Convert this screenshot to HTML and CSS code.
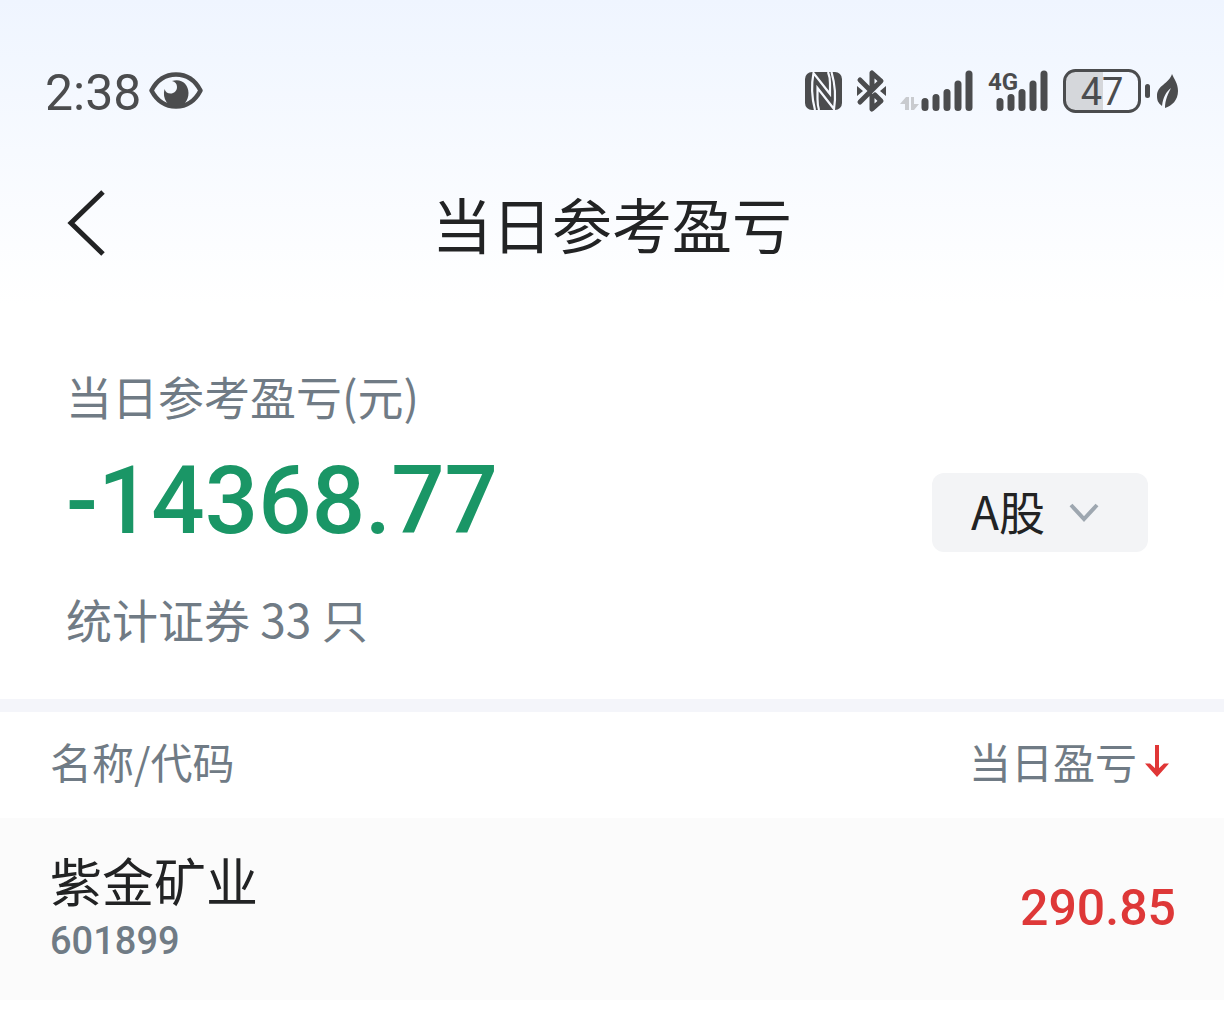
FILE: index.html
```html
<!DOCTYPE html>
<html lang="zh-CN">
<head>
	<meta charset="utf-8">
	<meta name="viewport" content="width=device-width, initial-scale=1">
	<title>当日参考盈亏</title>
	<link rel="stylesheet" href="styles.css">
</head>
<body>
<div class="top">
	<div class="status-bar">
		<span class="clock">2:38</span>
		<svg class="eye" width="54" height="38" viewBox="0 0 54 38">
			<path d="M2.500 18.500C8 8 17 2.500 27 2.500S46 8 51.500 18.500C46 29 37 34.500 27 34.500S8 29 2.500 18.500Z" fill="none" stroke="#4b4c4e" stroke-width="4.500" stroke-linejoin="round"/>
			<path d="M23 9C32 6 39.500 12 39.500 21C39.500 29 34 35 27 35C19 35 13 27 15.500 17C16.500 20 18.500 21.500 21.500 21.500C25 21.500 28 19 28 15C28 11.500 26 9.500 23 9Z" fill="#4b4c4e"/>
		</svg>
		<div class="status-icons">
			<svg width="37" height="38" viewBox="0 0 37 38">
				<rect width="37" height="38" rx="7" fill="#4b4c4e"/>
				<path d="M10 38Q5 19 8.500 1L25 22V11Q25 5 23 0M26.500 0Q32 19 29 37L12.500 16V27Q12.500 33 14 38" fill="none" stroke="#f6f9ff" stroke-width="2.200"/>
			</svg>
			<svg class="bluetooth" width="29" height="42" viewBox="0 0 29 42">
				<path d="M3 10L12 19M3 32L24 11L15 3V18M18 25L24 31L15 39V26" fill="none" stroke="#4b4c4e" stroke-width="5" stroke-linecap="round" stroke-linejoin="round"/>
				<path d="M0 16L6 21L0 26ZM29 16L23 21L29 26Z" fill="#4b4c4e"/>
			</svg>
			<svg width="72" height="42" viewBox="0 0 72 42">
				<path d="M4 40V34H-1L5 27H8V40ZM10 27H13V34H18L13 40H10Z" fill="#c9cbcf"/>
				<path d="M24 31.500V37.500M35 27.500V37.500M46 22.500V37.500M57 14V37.500M68 4V37.500" stroke="#4b4c4e" stroke-width="7" stroke-linecap="round"/>
			</svg>
			<svg width="60" height="42" viewBox="0 0 60 42">
				<text class="network" x="0" y="20">4G</text>
				<path d="M12 31.500V37.500M23 27.500V37.500M34 22.500V37.500M45 14V37.500M56 4V37.500" stroke="#4b4c4e" stroke-width="7" stroke-linecap="round"/>
			</svg>
			<svg class="battery" width="87" height="44" viewBox="0 0 87 44">
				<path d="M40 2H12Q2 2 2 12V32Q2 42 12 42H40Z" fill="#d5d7db"/>
				<rect x="1.500" y="1.500" width="75" height="41" rx="11" fill="none" stroke="#4b4c4e" stroke-width="3"/>
				<rect x="82" y="15" width="5" height="14" rx="2.500" fill="#4b4c4e"/>
				<text class="level" x="39" y="36" text-anchor="middle">47</text>
			</svg>
			<svg width="22" height="34" viewBox="0 0 22 34">
				<path d="M15 0C17 5 21 9 21 17C21 26 15 32 8 34C8 26 11 20 14 14C9 18 6 23 5 32C1 29 0 26 0 22C0 11 12 10 15 0Z" fill="#4b4c4e"/>
			</svg>
		</div>
	</div>
	<header class="header">
		<button class="back" type="button" aria-label="返回">
			<svg width="40" height="66" viewBox="0 0 40 66"><path d="M37 2L5 33L37 64" fill="none" stroke="#222324" stroke-width="5"/></svg>
		</button>
		<h1>当日参考盈亏</h1>
	</header>
</div>

<section class="summary">
	<div>
		<p class="label">当日参考盈亏(元)</p>
		<p class="amount">-14368.77</p>
		<p class="label">统计证券 33 只</p>
	</div>
	<div class="market">
		<select aria-label="市场">
			<option>A股</option>
		</select>
		<svg width="30" height="20" viewBox="0 0 30 20"><path d="M2 2L15 16L28 2" fill="none" stroke="#9ea7b0" stroke-width="4"/></svg>
	</div>
</section>

<table class="stocks">
	<thead>
		<tr>
			<th>名称/代码</th>
			<th class="right">
				<button class="sort" type="button">当日盈亏<svg width="26" height="34" viewBox="0 0 26 34"><path d="M13 1V30" stroke="#e03636" stroke-width="4"/><path d="M1 19.500H6L13 26L20 19.500H25L13 33Z" fill="#e03636"/></svg></button>
			</th>
		</tr>
	</thead>
	<tbody>
		<tr>
			<td>
				<div class="name">紫金矿业</div>
				<div class="code">601899</div>
			</td>
			<td class="profit">290.85</td>
		</tr>
	</tbody>
</table>
</body>
</html>
```
FILE: styles.css
```css
* {
  box-sizing: border-box;
}

body {
  margin: 0;
  background: #fff;
  color: #222324;
  font-family: "Noto Sans CJK SC", sans-serif;
}

h1, p {
  margin: 0;
  font-weight: 400;
}

svg {
  display: block;
  flex: none;
  overflow: visible;
}

button, select {
  padding: 0;
  border: 0;
  background: none;
  color: inherit;
  font: inherit;
}

.top {
  background: linear-gradient(#eff5ff, #fff);
}

.status-bar {
  display: flex;
  align-items: center;
  padding: 54px 45px 18px;
  color: #4b4c4e;
}

/* figures use Roboto, the rest of the page is CJK */
.clock, .network, .level, .amount, .code, .profit {
  font-family: Roboto, sans-serif;
}

.clock {
  padding-top: 4px;
  font-size: 50px;
  line-height: 70px;
}

.eye {
  margin-left: 8px;
}

.status-icons {
  display: flex;
  align-items: center;
  gap: 15px;
  margin-left: auto;
}

.battery {
  margin-right: -8px;
}

.network {
  font-size: 24px;
  font-weight: 700;
  fill: #4b4c4e;
}

.level {
  font-size: 38px;
  fill: #4b4c4e;
}

/* side columns are equal so the title stays centred */
.header {
  display: grid;
  grid-template-columns: 80px 1fr 80px;
  align-items: center;
  padding: 32px 66px 36px;
}

.header h1 {
  font-size: 60px;
  line-height: 90px;
  text-align: center;
}

.summary {
  display: flex;
  align-items: center;
  justify-content: space-between;
  padding: 58px 76px 48px 66px;
  border-bottom: 13px solid #f4f5fa;
}

.label {
  color: #707b85;
  font-size: 46px;
  line-height: 66px;
}

.amount {
  margin: 10px 0 20px;
  color: #1a9666;
  font-size: 94px;
  font-weight: 500;
  line-height: 127px;
}

.market {
  position: relative;
  padding-top: 12px;
}

.market select {
  display: block;
  appearance: none;
  padding: 4px 103px 8px 39px;
  border-radius: 12px;
  background: #f3f4f6;
  font-size: 46px;
  line-height: 67px;
}

.market svg {
  position: absolute;
  right: 49px;
  top: 42px;
  pointer-events: none;
}

.stocks {
  width: 100%;
  border-collapse: collapse;
}

.stocks th {
  padding: 16px 50px 24px;
  color: #707b85;
  font-size: 42px;
  font-weight: 400;
  line-height: 66px;
  text-align: left;
}

.stocks td {
  padding: 24px 50px 36px;
  background: #fbfbfb;
}

.stocks th.right {
  padding-right: 54px;
  text-align: right;
}

.sort {
  display: inline-flex;
  align-items: center;
  gap: 7px;
}

.name {
  font-size: 52px;
  line-height: 76px;
}

.code {
  color: #707b85;
  font-size: 38px;
  font-weight: 500;
  line-height: 46px;
}

.stocks .profit {
  padding: 24px 48px 26px;
  color: #de3838;
  font-size: 50px;
  font-weight: 500;
  text-align: right;
}
```
